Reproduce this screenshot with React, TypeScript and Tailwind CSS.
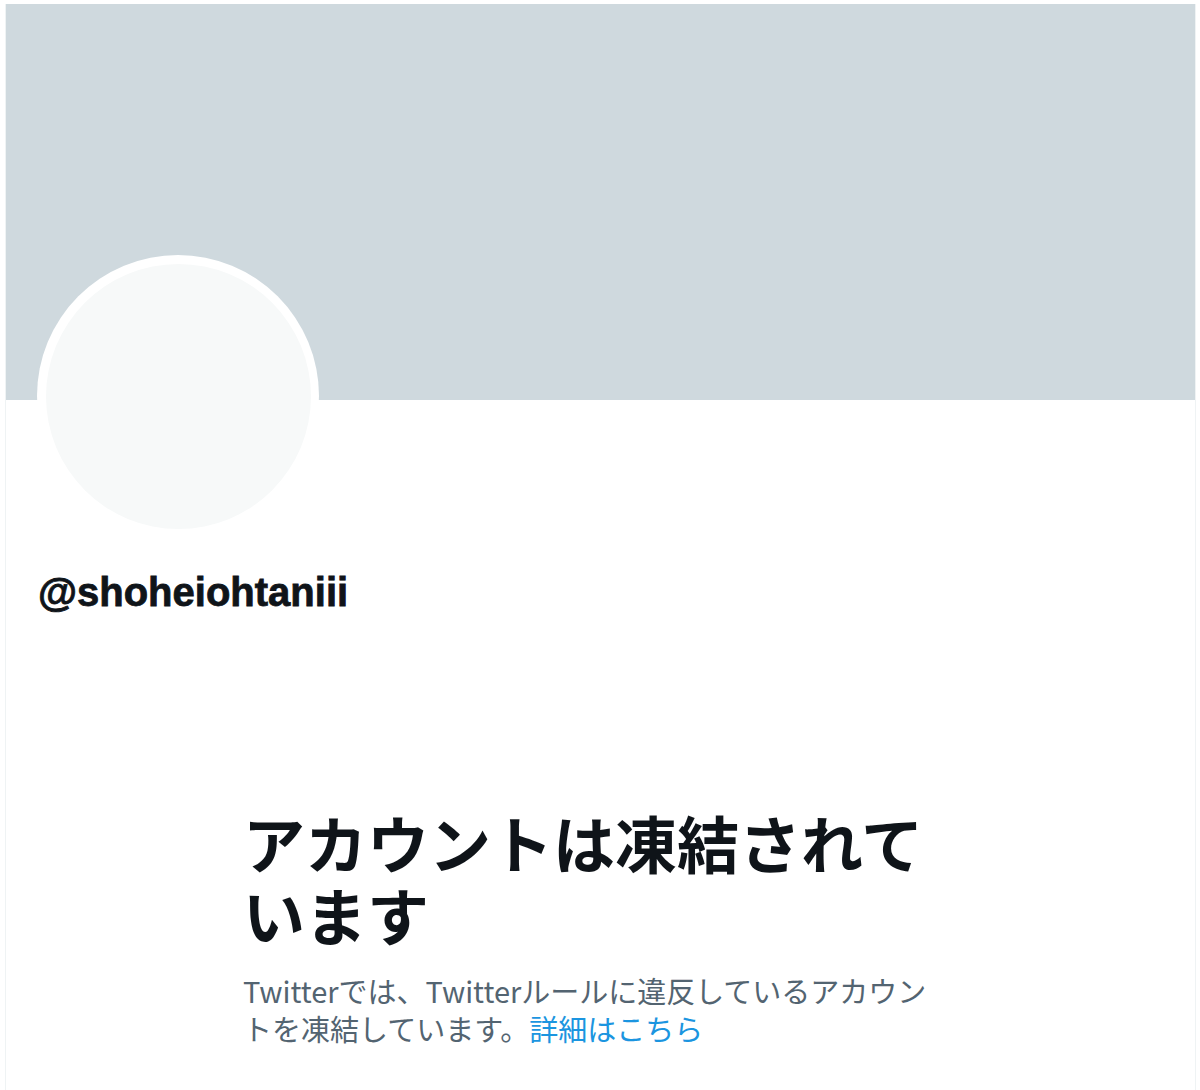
import React from "react";

export default function App() {
  return (
    <div className="min-h-[1090px] w-[1200px] bg-white pl-[5px] pt-[4px]">
      <div className="min-h-[1086px] w-[1191px] border-x border-[#EFF3F4] bg-white">
        <div className="h-[396px] w-full bg-[#CFD9DE]" />
        <div className="-mt-[145px] ml-[31px] flex h-[282px] w-[282px] rounded-full bg-white p-[8.5px]">
          <div className="flex-1 rounded-full bg-[#F7F9F9]" />
        </div>
        <div
          className="mt-[31px] pl-[32px] text-[40px] font-bold leading-[48px] text-[#0F1419] [-webkit-text-stroke:0.8px_#0F1419]"
          style={{ fontFamily: '"Liberation Sans", Arial, Helvetica, sans-serif' }}
        >
          @shoheiohtaniii
        </div>
        <div className="mt-[190px] ml-[237px] w-[700px] pb-[40px]">
          <h1
            className="text-[62px] font-bold leading-[72px] text-[#0F1419]"
            style={{ fontFamily: '"Noto Sans CJK JP", sans-serif' }}
          >
            アカウントは凍結されています
          </h1>
          <p
            className="mt-[21px] text-[29px] leading-[38px] text-[#536471]"
            style={{ fontFamily: '"Noto Sans CJK JP", sans-serif' }}
          >
            <span>Twitterでは、Twitterルールに違反しているアカウントを凍結しています。</span>
            <a className="text-[#1B95E0]" href="#">詳細はこちら</a>
          </p>
        </div>
      </div>
    </div>
  );
}
